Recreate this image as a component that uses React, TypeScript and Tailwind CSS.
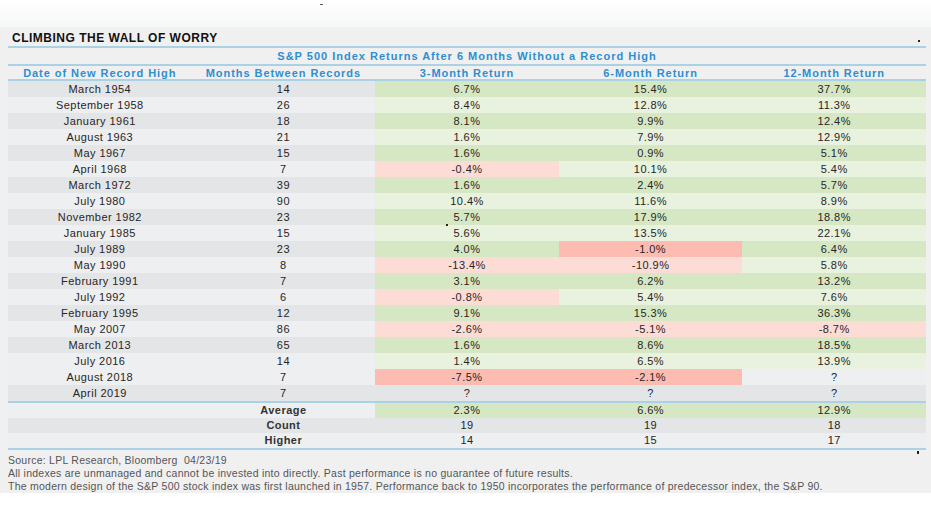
type Tone = 'G' | 'g' | 'R' | 'r' | ''

interface Row {
  date: string
  months: string
  cells: [string, Tone][]
  dark: boolean
}

const toneBg: Record<string, string> = {
  G: 'bg-[#d6e8c3]',
  g: 'bg-[#e8f2de]',
  R: 'bg-[#fcbcb2]',
  r: 'bg-[#fddcd6]',
}

const data: [string, string, string, Tone, string, Tone, string, Tone][] = [
  ['March 1954', '14', '6.7%', 'G', '15.4%', 'G', '37.7%', 'G'],
  ['September 1958', '26', '8.4%', 'g', '12.8%', 'g', '11.3%', 'g'],
  ['January 1961', '18', '8.1%', 'G', '9.9%', 'G', '12.4%', 'G'],
  ['August 1963', '21', '1.6%', 'g', '7.9%', 'g', '12.9%', 'g'],
  ['May 1967', '15', '1.6%', 'G', '0.9%', 'G', '5.1%', 'G'],
  ['April 1968', '7', '-0.4%', 'r', '10.1%', 'g', '5.4%', 'g'],
  ['March 1972', '39', '1.6%', 'G', '2.4%', 'G', '5.7%', 'G'],
  ['July 1980', '90', '10.4%', 'g', '11.6%', 'g', '8.9%', 'g'],
  ['November 1982', '23', '5.7%', 'G', '17.9%', 'G', '18.8%', 'G'],
  ['January 1985', '15', '5.6%', 'g', '13.5%', 'g', '22.1%', 'g'],
  ['July 1989', '23', '4.0%', 'G', '-1.0%', 'R', '6.4%', 'G'],
  ['May 1990', '8', '-13.4%', 'r', '-10.9%', 'r', '5.8%', 'g'],
  ['February 1991', '7', '3.1%', 'G', '6.2%', 'G', '13.2%', 'G'],
  ['July 1992', '6', '-0.8%', 'r', '5.4%', 'g', '7.6%', 'g'],
  ['February 1995', '12', '9.1%', 'G', '15.3%', 'G', '36.3%', 'G'],
  ['May 2007', '86', '-2.6%', 'r', '-5.1%', 'r', '-8.7%', 'r'],
  ['March 2013', '65', '1.6%', 'G', '8.6%', 'G', '18.5%', 'G'],
  ['July 2016', '14', '1.4%', 'g', '6.5%', 'g', '13.9%', 'g'],
  ['August 2018', '7', '-7.5%', 'R', '-2.1%', 'R', '?', ''],
  ['April 2019', '7', '?', '', '?', '', '?', ''],
]

const rows: Row[] = data.map((d, i) => ({
  date: d[0],
  months: d[1],
  cells: [
    [d[2], d[3]],
    [d[4], d[5]],
    [d[6], d[7]],
  ],
  dark: i === 19 ? true : i === 18 ? false : i % 2 === 0,
}))

const summary: Row[] = [
  { date: '', months: 'Average', cells: [['2.3%', 'G'], ['6.6%', 'G'], ['12.9%', 'G']], dark: false },
  { date: '', months: 'Count', cells: [['19', ''], ['19', ''], ['18', '']], dark: true },
  { date: '', months: 'Higher', cells: [['14', ''], ['15', ''], ['17', '']], dark: false },
]

function TableRow({ row, summaryRow }: { row: Row; summaryRow?: boolean }) {
  const stripe = row.dark ? 'bg-[#e4e5e7]' : 'bg-[#eeeff1]'
  const height = summaryRow ? 'h-[15px] leading-[15px]' : 'h-[16px] leading-[16px]'
  return (
    <div className={`grid grid-cols-5 ${height} text-[11px] tracking-[0.45px] text-[#262626] text-center`}>
      <div className={stripe}>{row.date}</div>
      <div className={`${stripe} ${summaryRow ? 'font-bold text-[#333]' : ''}`}>{row.months}</div>
      {row.cells.map(([value, tone], i) => (
        <div key={i} className={tone ? toneBg[tone] : stripe}>
          {value}
        </div>
      ))}
    </div>
  )
}

export default function App() {
  return (
    <div
      className="relative w-[931px] h-[523px] bg-white overflow-hidden"
      style={{ fontFamily: '"Liberation Sans", Arial, sans-serif' }}
    >
      <div className="h-[27px] bg-gradient-to-b from-white to-[#f6f7f7]" />

      {/* Chart panel */}
      <div className="h-[466px] bg-[#f0f0f1] pl-[8px] pr-[5px]">
        <div className="h-[19px] flex items-end pl-[4px] pb-[1px]">
          <h1 className="text-[12px] leading-[14px] font-bold tracking-[0.5px] text-[#111]">
            CLIMBING THE WALL OF WORRY
          </h1>
        </div>
        <div className="border-t-2 border-[#a9d2e6]" />
        <div className="h-[16px] text-center text-[11px] leading-[16px] font-bold tracking-[1px] text-[#2d8fd0]">
          S&amp;P 500 Index Returns After 6 Months Without a Record High
        </div>
        <div className="border-t-2 border-[#a9d2e6]" />
        <div className="grid grid-cols-5 h-[13px] text-center text-[11px] leading-[14px] font-bold tracking-[0.95px] text-[#2d8fd0]">
          <div>Date of New Record High</div>
          <div>Months Between Records</div>
          <div>3-Month Return</div>
          <div>6-Month Return</div>
          <div>12-Month Return</div>
        </div>
        <div className="border-t-2 border-[#a9d2e6]" />

        <div>
          {rows.map((row) => (
            <TableRow key={row.date} row={row} />
          ))}
        </div>
        <div className="border-t-2 border-[#a9d2e6]" />
        <div>
          {summary.map((row) => (
            <TableRow key={row.months} row={row} summaryRow />
          ))}
        </div>
        <div className="border-t-2 border-[#a9d2e6]" />

        {/* Footnotes */}
        <div className="pt-[4px] text-[10.5px] leading-[13px] tracking-[0.25px] text-[#555]">
          <p>Source: LPL Research, Bloomberg&nbsp;&nbsp;04/23/19</p>
          <p>All indexes are unmanaged and cannot be invested into directly. Past performance is no guarantee of future results.</p>
          <p>
            The modern design of the S&amp;P 500 stock index was first launched in 1957. Performance back to 1950 incorporates the performance of predecessor index, the S&amp;P 90.
          </p>
        </div>
      </div>

      {/* stray specks from the source image */}
      <div className="absolute left-[320px] top-[4px] w-[3px] h-[1px] bg-[#555]" />
      <div className="absolute left-[918px] top-[40px] w-[2px] h-[2px] bg-[#222]" />
      <div className="absolute left-[446px] top-[224px] w-[2px] h-[2px] bg-[#222]" />
      <div className="absolute left-[917px] top-[451px] w-[2px] h-[3px] bg-[#222]" />
    </div>
  )
}
